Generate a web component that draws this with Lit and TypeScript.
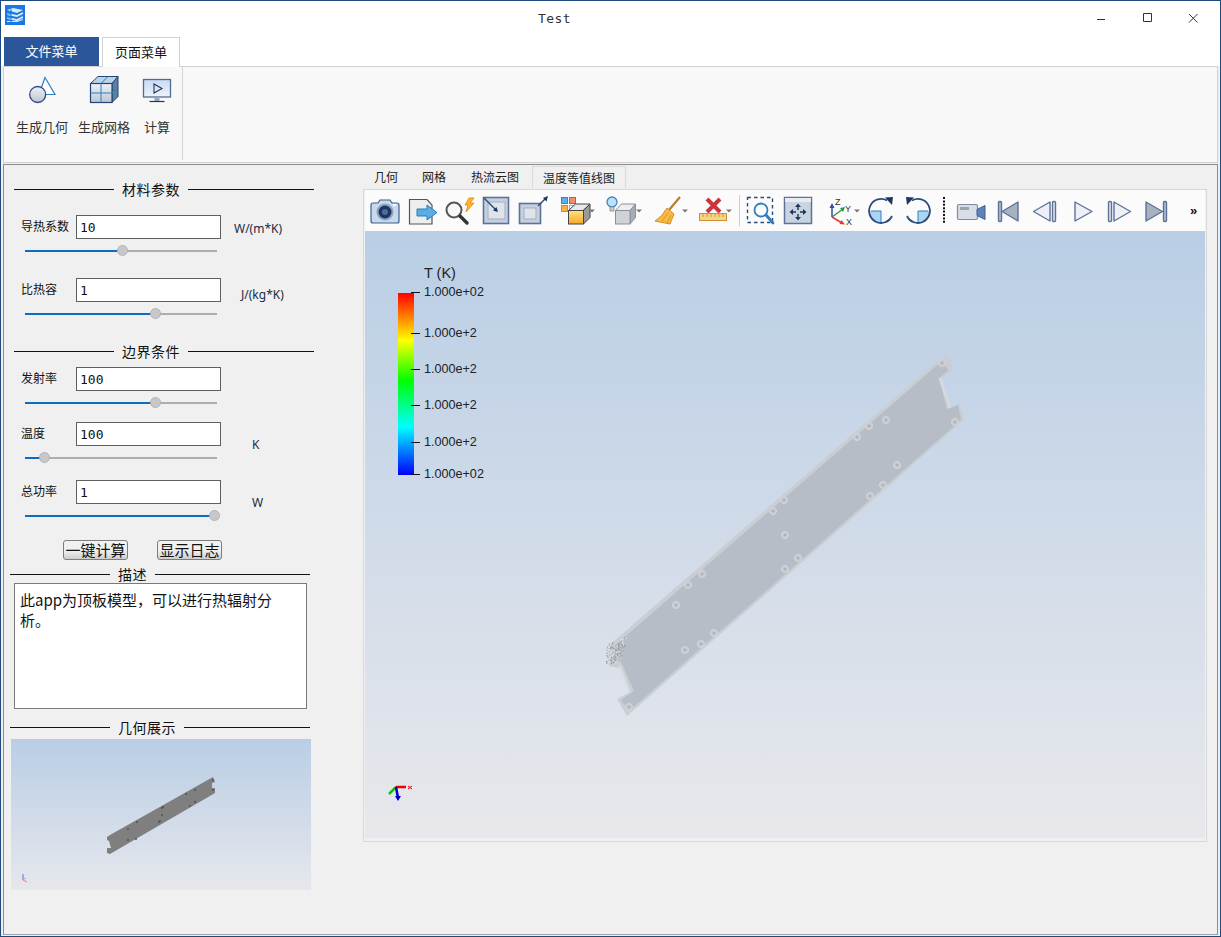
import { LitElement, html, svg, css } from 'lit';
import { customElement } from 'lit/decorators.js';

const FIELDS = [
  { cls: 'r1', label: '导热系数', value: '10', unit: 'W/(m*K)', thumb: 97 },
  { cls: 'r2', label: '比热容', value: '1', unit: 'J/(kg*K)', thumb: 130 },
  { cls: 'r3', label: '发射率', value: '100', unit: '', thumb: 130 },
  { cls: 'r4', label: '温度', value: '100', unit: 'K', thumb: 19 },
  { cls: 'r5', label: '总功率', value: '1', unit: 'W', thumb: 189 }
];

const BOLT_HOLES = [
  [942, 363], [955, 422], [886, 420], [869, 426], [857, 437], [897, 465], [883, 485], [870, 496],
  [784, 500], [773, 511], [785, 535], [798, 558], [785, 569], [702, 574], [688, 585], [676, 605],
  [714, 633], [701, 644], [685, 650], [629, 707]
];

const THUMB_DOTS = [
  [128, 829], [128, 840], [137, 822], [136, 839], [162, 808], [160, 821], [159, 822], [162, 815],
  [163, 807], [186, 794], [195, 790], [195, 802], [190, 806], [213, 780], [213, 790]
];

const caret = (x: number) => svg`<path d="M${x - 3} 209.5h6l-3 3z" fill="#777"/>`;

const flatBtn = (body: unknown) => svg`<g stroke="#5c7299" stroke-width="1.4" stroke-linejoin="round">${body}</g>`;

// every toolbar icon is drawn in page coordinates, the slot only crops the viewBox
const TOOLS: Array<[number, number, unknown]> = [
  [366, 38, svg`
    <path d="M373 203h5l2-3h10l2 3h5q2 0 2 2v16q0 2-2 2h-24q-2 0-2-2v-16q0-2 2-2z" fill="#c9d8ea" stroke="#3e5f92" stroke-width="1.2"/>
    <circle cx="385" cy="212" r="8.5" fill="#8ba4c4"/><circle cx="385" cy="212" r="6.5" fill="#1f3560"/><circle cx="385" cy="212" r="3" fill="#4e6c9c"/>
    <rect x="393" y="204" width="3" height="2" fill="#fff"/>`],
  [404, 37, svg`
    <path d="M409.500 199.500H427l5 5.500v19h-22.500z" fill="#eee" stroke="#555" stroke-width="1.2"/>
    <path d="M417 209h10v-4l10 7.500-10 7.500v-4h-10z" fill="#5aaee6" stroke="#2a7ab8"/>`],
  [441, 36, svg`
    <circle cx="454" cy="210" r="7.500" fill="#f7f7f7" stroke="#555" stroke-width="2"/>
    <path d="M460 216l7 7" stroke="#333" stroke-width="3.400" stroke-linecap="round"/>
    <path d="M469 198h5l-4 5h4l-8 9 2-7h-3z" fill="#ffb638" stroke="#e08000" stroke-width=".8"/>`],
  [477, 37, svg`
    <rect x="483.500" y="197.500" width="25" height="26" fill="#c5d0de" stroke="#5c7299" stroke-width="1.600"/>
    <rect x="488" y="202" width="17" height="17" fill="#dfe4ea" stroke="#a2afc2"/>
    <path d="M484 198l12 12" stroke="#2c4a7c" stroke-width="1.400"/><path d="M498 212l-5-1.500 3.500-3.500z" fill="#1f3560"/>`],
  [514, 38, svg`
    <rect x="519.500" y="203.500" width="21" height="20" fill="#c5d0de" stroke="#5c7299" stroke-width="1.600"/>
    <rect x="524" y="208" width="12" height="11" fill="#dfe4ea" stroke="#a2afc2"/>
    <path d="M538 206l8-8" stroke="#2c4a7c" stroke-width="1.400"/><path d="M548 196l-1.500 5.500-3.500-3.500z" fill="#1f3560"/>`],
  [552, 49, svg`
    <rect x="561.500" y="197.500" width="6" height="6" fill="#5ab0e6" stroke="#3a86c0"/>
    <rect x="569.500" y="197.500" width="6" height="6" fill="#ef8f70" stroke="#c85a40"/>
    <rect x="561.500" y="205.500" width="6" height="6" fill="#f8b040" stroke="#d88a20"/>
    <rect x="569.500" y="205.500" width="6" height="6" fill="#fff" stroke="#aaa"/>
    <path d="M568.500 210.500l7-6.500h14.500l-7 6.500z" fill="#e8e8e8" stroke="#444"/>
    <path d="M583.500 210.500l6.500-6.500v13.500l-6.500 6.500z" fill="#9a9a9a" stroke="#444"/>
    <rect x="568.500" y="210.500" width="15" height="13.500" fill="url(#amber)" stroke="#444"/>
    ${caret(592)}`],
  [601, 47, svg`
    <circle cx="612" cy="202" r="5" fill="#bfe0f7" stroke="#3b85c5" stroke-width="1.300"/>
    <path d="M610 207h4v4h-4z" fill="#ccc" stroke="#888" stroke-width=".8"/>
    <path d="M615.500 210.500l6-6.500h14l-5.500 6.500z" fill="#eceef1" stroke="#8a8f98"/>
    <path d="M630 210.500l5.500-6.500v13.500L630 224z" fill="#a7adb6" stroke="#8a8f98"/>
    <rect x="615.500" y="210.500" width="14.500" height="13.500" fill="#cfd3d9" stroke="#8a8f98"/>
    ${caret(639)}`],
  [648, 45, svg`
    <path d="M680 197l-11 13" stroke="#bd7c2c" stroke-width="2.200"/>
    <path d="M667 208l7 6-4 10-15-3q7-4 12-13z" fill="#f6bb45" stroke="#d28d22"/>
    <path d="M668 213l-6 8M671 215l-4 8" stroke="#d28d22" stroke-width=".8"/>
    ${caret(685)}`],
  [693, 43, svg`
    <path d="M707 199l13 13M720 199l-13 13" stroke="#c8363c" stroke-width="4"/>
    <rect x="699.500" y="213.500" width="27" height="7" fill="#f6d488" stroke="#d09030"/>
    <path d="M703 214v3M707 214v3M711 214v3M715 214v3M719 214v3M723 214v3" stroke="#c08428" stroke-width=".8"/>
    ${caret(729)}`],
  [736, 7, svg`<path d="M739.500 195v31" stroke="#ccc"/>`],
  [743, 35, svg`
    <rect x="747.500" y="197.500" width="25" height="25" fill="none" stroke="#2c4a7c" stroke-width="1.400" stroke-dasharray="3.500 3"/>
    <circle cx="761" cy="210" r="6.500" fill="#fff" stroke="#2f7fc0" stroke-width="1.800"/>
    <path d="M766 215l7 8" stroke="#2f7fc0" stroke-width="2.800" stroke-linecap="round"/>`],
  [778, 40, svg`
    <rect x="784.500" y="197.500" width="27" height="26" fill="#c9d4e1" stroke="#5c7299" stroke-width="1.500"/>
    <rect x="785" y="198" width="26" height="4" fill="#e7ecf2"/>
    <path d="M798 206v4M798 214v4M792 212h4M800 212h4" stroke="#1f3560" stroke-width="1.400"/>
    <path d="M798 203.500l3 3.500h-6zM798 220.500l3-3.500h-6zM789.500 212l3.500-3v6zM806.500 212l-3.500-3v6z" fill="#1f3560"/>`],
  [818, 44, svg`
    <path d="M832 217v-12" stroke="#2b4fb0" stroke-width="1.500"/><path d="M832 203l2.500 5h-5z" fill="#2b4fb0"/>
    <path d="M832 217l11-8" stroke="#2a9a45" stroke-width="1.500"/><path d="M845 207l-2 5-3-4z" fill="#2a9a45"/>
    <path d="M832 217l10 6" stroke="#e03a3a" stroke-width="1.500"/><path d="M845 224.500l-5.500-.5 2-4z" fill="#e03a3a"/>
    <text x="835" y="205" class="axis">Z</text><text x="845" y="212" class="axis">Y</text><text x="846" y="225" class="axis">X</text>
    ${caret(857)}`],
  [862, 37, svg`
    <path d="M869 211h12v12q-10 0-12-12z" fill="#a9d6f3"/>
    <path d="M871 211h10v12" fill="none" stroke="#2f7fc0"/>
    <path d="M892 216a12 12 0 1 1-5-15.500" fill="none" stroke="#2c4a7c" stroke-width="1.800"/>
    <path d="M885 197.500l8-.5-1 8z" fill="#1f3560"/>`],
  [899, 38, svg`
    <path d="M930 211h-12v12q10 0 12-12z" fill="#a9d6f3"/>
    <path d="M928 211h-10v12" fill="none" stroke="#2f7fc0"/>
    <path d="M907 216a12 12 0 1 0 5-15.500" fill="none" stroke="#2c4a7c" stroke-width="1.800"/>
    <path d="M914 197.500l-8-.5 1 8z" fill="#1f3560"/>`],
  [937, 14, svg`<path d="M944 197v26" stroke="#111" stroke-width="2" stroke-dasharray="2 1.400"/>`],
  [951, 39, svg`
    <rect x="957.500" y="204.500" width="20" height="15" rx="1.500" fill="#d9dee6" stroke="#7d8ca6" stroke-width="1.200"/>
    <rect x="960" y="207" width="9" height="3" fill="#9ba3af"/>
    <path d="M977 209.500l8-4v14l-8-4z" fill="#5c84b6" stroke="#3e5f92"/>`],
  [990, 37, flatBtn(svg`
    <rect x="998.500" y="201.500" width="3" height="20" rx="1" fill="#b5bdcb"/>
    <path d="M1018 202v19l-16-9.500z" fill="#a9b1c0"/>`)],
  [1027, 37, flatBtn(svg`
    <path d="M1050 202v19l-16.500-9.500z" fill="#eef0f5"/>
    <rect x="1052.500" y="201.500" width="3" height="20" rx="1" fill="#dfe3ea"/>`)],
  [1064, 37, flatBtn(svg`<path d="M1075 202v19l17-9.500z" fill="#eef0f5"/>`)],
  [1101, 37, flatBtn(svg`
    <rect x="1108.500" y="201.500" width="3" height="20" rx="1" fill="#dfe3ea"/>
    <path d="M1114 202v19l16.500-9.500z" fill="#eef0f5"/>`)],
  [1138, 37, flatBtn(svg`
    <path d="M1146 202v19l16.500-9.500z" fill="#a9b1c0"/>
    <rect x="1163.500" y="201.500" width="3" height="20" rx="1" fill="#b5bdcb"/>`)],
];

const TICKS = [
  [292, '1.000e+02'], [333, '1.000e+2'], [369, '1.000e+2'], [405, '1.000e+2'], [442, '1.000e+2'], [474, '1.000e+02']
] as Array<[number, string]>;

// deterministic speckle for the meshed corner of the plate
const speckle = () => {
  const out: unknown[] = [];
  let s = 7;
  for (let i = 0; i < 130; i++) {
    s = (s * 137 + 91) % 1009;
    const x = 606 + (s % 21);
    s = (s * 137 + 91) % 1009;
    const y = 645 + (s % 22) - (x - 606) * 0.45;
    const c = ['#a5a9ae', '#e2e4e6', '#94989e', '#cfd2d6'][s % 4];
    if (x + (y - 645) * 0.3 < 624) out.push(svg`<rect x="${x}" y="${y}" width="1.500" height="1.500" fill="${c}"/>`);
  }
  return out;
};

@customElement('app-root')
class AppRoot extends LitElement {
  static styles = css`
    :host {
      display: block;
      width: 1221px;
      height: 937px;
      box-sizing: border-box;
      border: 1px solid #1f4a80;
      background: #f0f0f0;
      font-family: "Noto Sans CJK SC", "Noto Sans", sans-serif;
      color: #111;
      overflow: hidden;
    }

    .titlebar {
      position: relative;
      display: flex;
      align-items: center;
      height: 36px;
      background: #fff;
    }

    .app-icon {
      display: block;
      margin: 0 0 8px 4px;
    }

    .title {
      position: absolute;
      left: 537px;
      top: 10px;
      font: 13px "DejaVu Sans Mono", monospace;
      letter-spacing: .4px;
      color: #333;
    }

    .win-buttons {
      display: flex;
      margin-left: auto;
      margin-right: 4px;
    }

    .win-buttons svg {
      display: block;
      width: 46px;
      height: 36px;
    }

    .tabbar {
      display: flex;
      align-items: flex-start;
      height: 29px;
      padding-left: 3px;
      background: #fff;
    }

    .file-tab {
      width: 95px;
      height: 29px;
      background: #2b579a;
      color: #fff;
      font-size: 13px;
      line-height: 28px;
      text-align: center;
    }

    .page-tab {
      position: relative;
      z-index: 1;
      box-sizing: border-box;
      width: 78px;
      height: 30px;
      margin-left: 3px;
      background: #fff;
      border: 1px solid #d2d2d2;
      border-bottom: none;
      font-size: 13px;
      line-height: 27px;
      text-align: center;
    }

    .ribbon {
      display: flex;
      box-sizing: border-box;
      height: 97px;
      margin: 0 2px;
      background: #f8f8f8;
      border: 1px solid #d2d2d2;
    }

    .ribbon-group {
      display: flex;
      align-items: flex-start;
      gap: 10px;
      box-sizing: border-box;
      width: 179px;
      height: 93px;
      padding-left: 12px;
      border-right: 1px solid #d4d4d4;
    }

    .ribbon-item {
      display: flex;
      flex-direction: column;
      align-items: center;
      width: 52px;
      font-size: 13px;
      color: #333;
    }

    .ribbon-item.short {
      width: 28px;
      margin-left: 3px;
    }

    .ribbon-item svg {
      display: block;
      height: 50px;
      width: 52px;
      flex: none;
    }

    .ribbon-item span {
      margin-top: 1px;
      white-space: nowrap;
      line-height: 18px;
    }

    .main {
      display: flex;
      box-sizing: border-box;
      height: 771px;
      margin: 1px 2px 0;
      border: 1px solid #8c8c8c;
      border-bottom-color: #a0a0a0;
      background: #f0f0f0;
    }

    .left {
      flex: none;
      box-sizing: border-box;
      width: 359px;
      padding-left: 10px;
    }

    .section {
      display: flex;
      align-items: center;
      width: 300px;
      height: 20px;
      font-size: 14px;
      letter-spacing: .5px;
    }

    .section::before,
    .section::after {
      content: '';
      height: 1px;
      background: #111;
    }

    .section::before {
      flex: none;
      width: 100px;
    }

    .section::after {
      flex: 1;
    }

    .section span {
      padding: 0 8px;
      line-height: 18px;
      white-space: nowrap;
    }

    .section.first { margin-top: 14px; }
    .section.second { margin-top: 19px; }

    .section.wide {
      height: 18px;
      margin-left: -4px;
    }

    .section.desc { margin-top: 5px; }
    .section.geo { margin-top: 9px; }

    .field {
      display: flow-root;
    }

    .field-top {
      display: flex;
      height: 24px;
    }

    .r1 { margin-top: 16px; }
    .r2 { margin-top: 19px; }
    .r3 { margin-top: 6px; }
    .r4 { margin-top: 11px; }
    .r5 { margin-top: 14px; }

    .label {
      flex: none;
      box-sizing: border-box;
      width: 62px;
      padding-left: 7px;
      font-size: 12px;
      line-height: 22px;
      white-space: nowrap;
    }

    input {
      flex: none;
      box-sizing: border-box;
      width: 145px;
      height: 24px;
      padding: 1px 3px 0;
      border: 1px solid #5f5f5f;
      border-radius: 0;
      outline: none;
      background: #fff;
      color: #111;
      font: 13px "DejaVu Sans Mono", monospace;
    }

    .unit {
      font: 12px "Noto Sans", sans-serif;
      color: #1b2a44;
      line-height: 16px;
      white-space: nowrap;
    }

    .r1 .unit { padding: 6px 0 0 13px; }
    .r2 .unit { padding: 9px 0 0 20px; }
    .r4 .unit, .r5 .unit { padding: 15px 0 0 31px; }

    .slider {
      position: relative;
      width: 192px;
      height: 2px;
      margin: 11px 0 7px 11px;
      background: #adadad;
    }

    .slider i {
      display: block;
      height: 100%;
      background: #0f6cbd;
    }

    .slider b {
      position: absolute;
      top: -5px;
      box-sizing: border-box;
      width: 11px;
      height: 11px;
      margin-left: -5px;
      border: 1px solid #b4b4b4;
      border-radius: 50%;
      background: #c8c8c8;
    }

    .actions {
      display: flex;
      gap: 29px;
      margin: 16px 0 0 49px;
    }

    .actions button {
      box-sizing: border-box;
      width: 65px;
      height: 20px;
      padding: 0;
      border: 1px solid #7d7d7d;
      border-radius: 3px;
      background: linear-gradient(#f2f2f2 0, #efefef 55%, #cdcdcd 100%);
      color: #111;
      font: 15px/18px "Noto Sans CJK SC", sans-serif;
    }

    .description {
      box-sizing: border-box;
      width: 293px;
      height: 126px;
      padding: 6px 20px 0 5px;
      border: 1px solid #7a7a7a;
      background: #fff;
      font-size: 15px;
      line-height: 20px;
    }

    .preview {
      display: block;
      width: 300px;
      height: 151px;
      margin: 3px 0 0 -3px;
      background: linear-gradient(#b9cee5, #e6e7ec);
    }

    .right {
      flex: none;
      width: 844px;
    }

    .tabs {
      display: flex;
      height: 22px;
      margin-top: 1px;
      font-size: 12px;
      line-height: 22px;
    }

    .tabs span {
      padding: 0 12px;
      color: #222;
    }

    .tabs span:first-child { padding: 0 12px 0 11px; }
    .tabs span:nth-child(3) { padding: 0 13px; }

    .tabs span.on {
      padding: 0 10px;
      border: 1px solid #dadada;
      border-bottom: none;
      line-height: 21px;
    }

    .panel {
      box-sizing: border-box;
      height: 653px;
      margin-top: 1px;
      padding: 0 1px;
      border: 1px solid #d8d8d8;
    }

    .toolbar {
      display: flex;
      height: 41px;
      padding-left: 1px;
      background: #fbfbfb;
      overflow: hidden;
    }

    .toolbar svg {
      display: block;
      flex: none;
      height: 41px;
    }

    .axis {
      font: 9px "Liberation Sans", sans-serif;
      fill: #333;
    }

    .more {
      flex: none;
      width: 40px;
      padding-left: 15px;
      box-sizing: border-box;
      font: bold 13px/41px "Liberation Sans", sans-serif;
    }

    .view {
      display: block;
      width: 840px;
      height: 607px;
      background: linear-gradient(#b9cee5, #e8e8ec);
    }

    .plate {
      filter: blur(.4px);
    }

    .legend {
      font: 12.600px "Liberation Sans", sans-serif;
      fill: #222;
    }

    .legend-title {
      font: 14.500px "Liberation Sans", sans-serif;
      fill: #222;
    }
  `;

  renderField (f: typeof FIELDS[number]) {
    return html`
      <div class="field ${f.cls}">
        <div class="field-top">
          <span class="label">${f.label}</span>
          <input .value=${f.value}>
          <span class="unit">${f.unit}</span>
        </div>
        <div class="slider">
          <i style="width:${f.thumb}px"></i>
          <b style="left:${f.thumb}px"></b>
        </div>
      </div>
    `;
  }

  renderPlate () {
    return svg`
      <g class="plate">
        <path d="M606 648L945 354l5 2 3 15-12 7 2 7 7 23 10-5 4 17-337 296-10-17 13-7-10-27-1 3-10-2z" fill="#c9ced4"/>
        <path d="M612 648L943 360l5 11-9 7 8 31 11-4 3 15-332 291-8-11 13-9-12-27z" fill="#b6bdc6"/>
        <path d="M620 666l10 26" stroke="#d8dade" stroke-width="2"/>
        <path d="M940 378l10 30" stroke="#d5d9de" stroke-width="3"/>
        ${speckle()}
        ${BOLT_HOLES.map(([x, y]) => svg`
          <circle cx="${x}" cy="${y}" r="3.500" fill="#c6cad0" stroke="#d4d7db"/>
          <circle cx="${x}" cy="${y}" r="1.300" fill="#acb2b9"/>
        `)}
      </g>
    `;
  }

  renderLegend () {
    return svg`
      <text class="legend-title" x="424" y="278">T (K)</text>
      <rect x="398" y="293" width="16" height="182" fill="url(#rainbow)"/>
      ${TICKS.map(([y, label]) => svg`
        <path d="M411 ${y + .5}h9" stroke="#111"/>
        <text class="legend" x="424" y="${y + 4}">${label}</text>
      `)}
    `;
  }

  render () {
    return html`
      <div class="titlebar">
        <svg class="app-icon" width="20" height="20" viewBox="0 0 20 20">
          <rect width="20" height="20" fill="#1b78e2"/>
          <path d="M2 5l6-2 10 2-6 3zM2 8v2l10 2 6-3V7l-6 3zM2 12v2l10 2 6-3v-2l-6 3zM2 16v1h10l6-2v-1l-6 2z" fill="#d8e9fb"/>
          <path d="M6 4v14M2 9h4M2 13h4" stroke="#1b78e2"/>
        </svg>
        <span class="title">Test</span>
        <div class="win-buttons">
          <svg viewBox="0 0 46 36"><path d="M19 18.500h8" stroke="#333"/></svg>
          <svg viewBox="0 0 46 36"><path d="M19.500 12.500h8v8h-8z" fill="none" stroke="#333"/></svg>
          <svg viewBox="0 0 46 36"><path d="M19 13l8.500 8.500M27.500 13L19 21.500" stroke="#333"/></svg>
        </div>
      </div>

      <div class="tabbar">
        <div class="file-tab">文件菜单</div>
        <div class="page-tab">页面菜单</div>
      </div>

      <div class="ribbon">
        <div class="ribbon-group">
          <div class="ribbon-item">
            <svg viewBox="16 67 52 50">
              <path d="M45 77.500L55 94.500H39z" fill="#fff" stroke="#2a80c0" stroke-width="1.200"/>
              <circle cx="37.700" cy="94.500" r="8" fill="url(#disc)" stroke="#2f4a7c" stroke-width="1.300"/>
            </svg>
            <span>生成几何</span>
          </div>
          <div class="ribbon-item">
            <svg viewBox="78 67 52 50">
              <path d="M90.500 83.500l7.500-7h20l-6 7z" fill="#b9d3e8" stroke="#24456f"/>
              <path d="M112 83.500l6-7v20l-6 6z" fill="#5f7f9f" stroke="#24456f"/>
              <rect x="90.500" y="83.500" width="21.500" height="19" fill="url(#disc)" stroke="#24456f" stroke-width="1.200"/>
              <path d="M101 83.500v19M90.500 93h21.500M108 76.500l-7 7M115 89l-3 4" fill="none" stroke="#2a80c0"/>
            </svg>
            <span>生成网格</span>
          </div>
          <div class="ribbon-item short">
            <svg viewBox="130.500 67 52 50">
              <rect x="143" y="79.500" width="27" height="17.500" fill="url(#screen)" stroke="#54698f" stroke-width="1.300"/>
              <path d="M153.500 84v9l8-4.500z" fill="none" stroke="#1f3560" stroke-width="1.100"/>
              <path d="M154 97h5v4h-5z" fill="#9aa7bb"/>
              <path d="M149 101.500h15" stroke="#1f3560" stroke-width="1.200"/>
            </svg>
            <span>计算</span>
          </div>
        </div>
      </div>

      <div class="main">
        <div class="left">
          <div class="section first"><span>材料参数</span></div>
          ${FIELDS.slice(0, 2).map(f => this.renderField(f))}
          <div class="section second"><span>边界条件</span></div>
          ${FIELDS.slice(2).map(f => this.renderField(f))}
          <div class="actions">
            <button>一键计算</button>
            <button>显示日志</button>
          </div>
          <div class="section wide desc"><span>描述</span></div>
          <div class="description">此app为顶板模型，可以进行热辐射分析。</div>
          <div class="section wide geo"><span>几何展示</span></div>
          <svg class="preview" viewBox="11 739 300 151">
            <path d="M107 837l3-2 103-58 2 5-3 1v5l3 0v5L110 854l-3-1v-5l4 0-2-7-2-1z" fill="#7f7f7f"/>
            ${THUMB_DOTS.map(([x, y]) => svg`<circle cx="${x}" cy="${y}" r=".9" fill="#4c4c4c"/>`)}
            <path d="M23 880v-6" stroke="#6a6ae8"/>
            <path d="M23 880l3-2" stroke="#6ad88a"/>
            <path d="M23 880l4 2" stroke="#f08080"/>
          </svg>
        </div>

        <div class="right">
          <div class="tabs">
            <span>几何</span><span>网格</span><span>热流云图</span><span class="on">温度等值线图</span>
          </div>
          <div class="panel">
            <div class="toolbar">
              ${TOOLS.map(([x, w, body]) => html`
                <svg width=${w} viewBox="${x} 190 ${w} 41">${body}</svg>
              `)}
              <span class="more">»</span>
            </div>
            <svg class="view" viewBox="365 231 840 607">
              ${this.renderLegend()}
              ${this.renderPlate()}
              <path d="M396 787l-7 7" stroke="#0c0" stroke-width="2.500"/>
              <path d="M396 787h10" stroke="#e00" stroke-width="2.500"/>
              <path d="M396 787l2 11" stroke="#00c" stroke-width="2.500"/>
              <path d="M395 796h6l-3 5z" fill="#00c"/>
              <path d="M408 786l4 3M412 786l-4 3" stroke="#e00"/>
            </svg>
          </div>
        </div>
      </div>

      <svg width="0" height="0" style="position:absolute">
        <defs>
          <linearGradient id="rainbow" x1="0" y1="0" x2="0" y2="1">
            <stop offset="0" stop-color="#f00"/>
            <stop offset=".26" stop-color="#ff0"/>
            <stop offset=".48" stop-color="#0f0"/>
            <stop offset=".735" stop-color="#0ff"/>
            <stop offset="1" stop-color="#00f"/>
          </linearGradient>
          <linearGradient id="amber" x1="0" y1="0" x2="0" y2="1">
            <stop offset="0" stop-color="#ffe184"/>
            <stop offset="1" stop-color="#f6a821"/>
          </linearGradient>
          <linearGradient id="disc" x1="0" y1="0" x2="0" y2="1">
            <stop offset="0" stop-color="#eef1f5"/>
            <stop offset="1" stop-color="#bcc6d4"/>
          </linearGradient>
          <linearGradient id="screen" x1="0" y1="0" x2="0" y2="1">
            <stop offset="0" stop-color="#c8dbf2"/>
            <stop offset="1" stop-color="#eef3fa"/>
          </linearGradient>
        </defs>
      </svg>
    `;
  }
}
